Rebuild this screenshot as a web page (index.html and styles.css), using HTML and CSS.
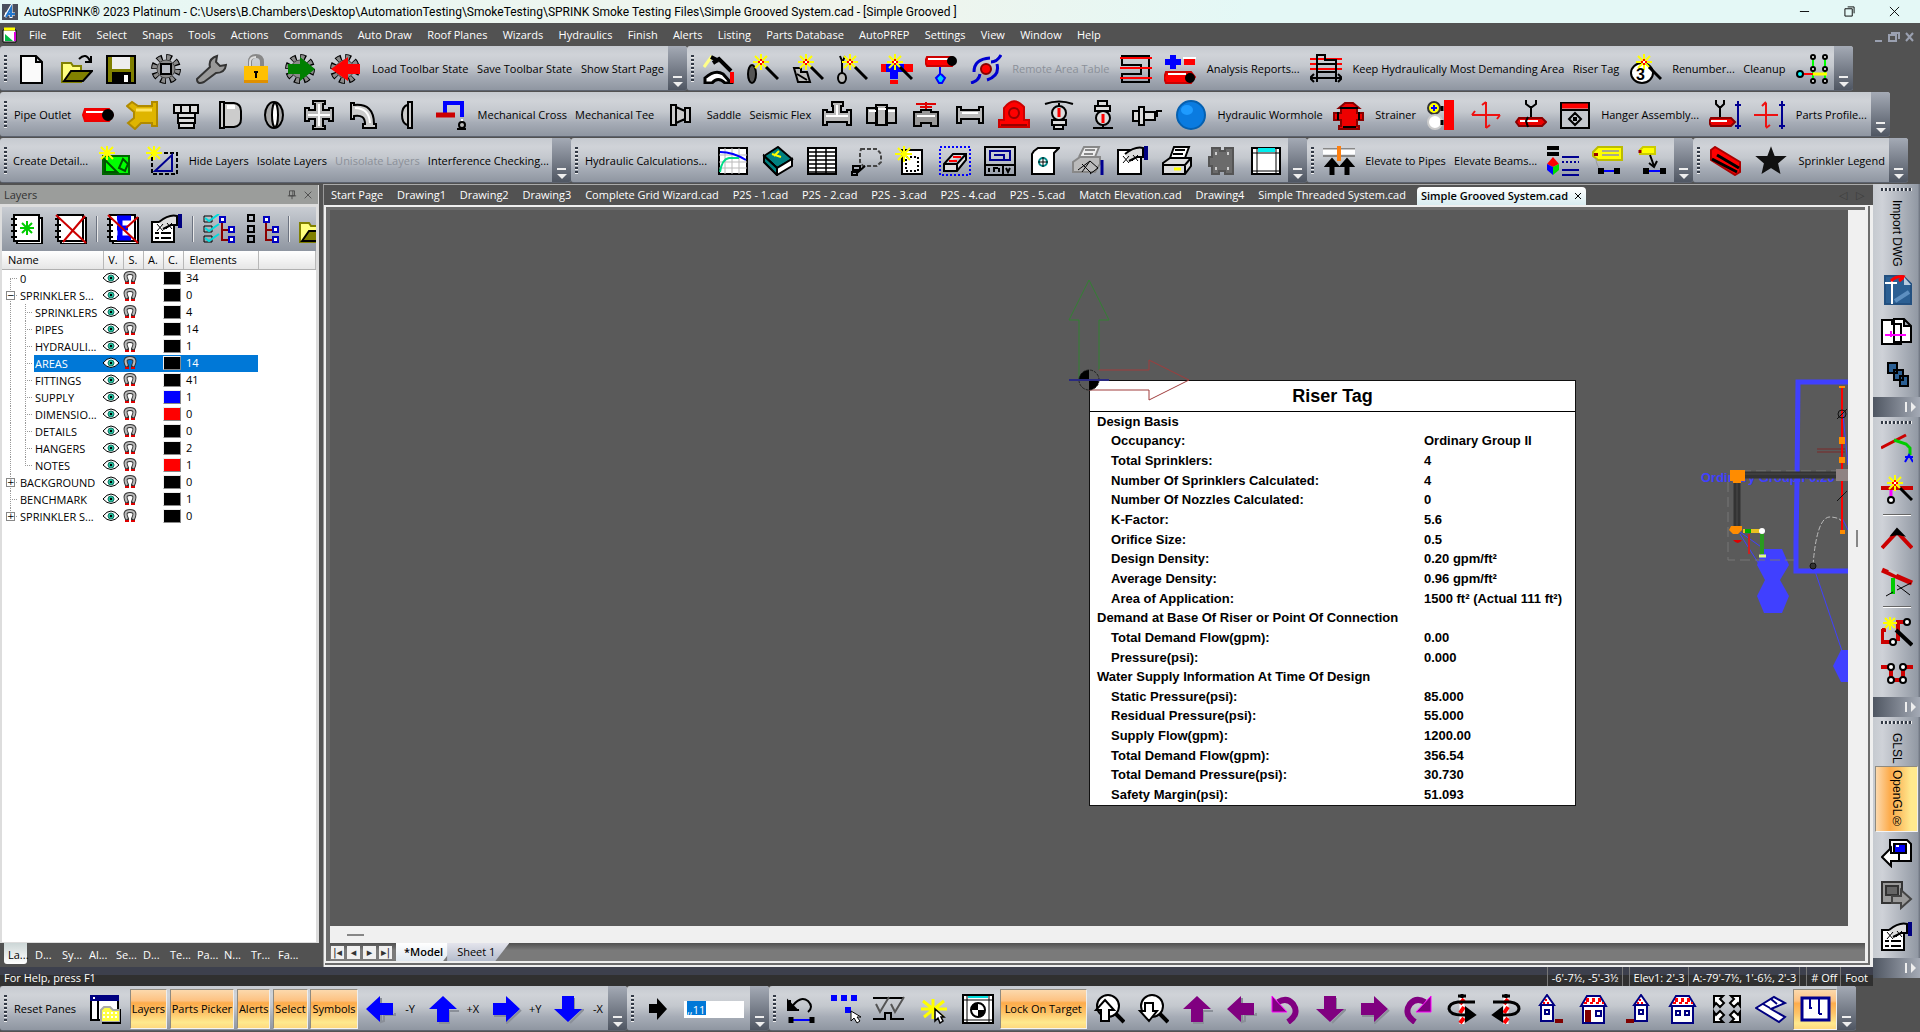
FILE: index.html
```html
<!DOCTYPE html>
<html lang="en">
<head>
<meta charset="utf-8">
<title>AutoSPRINK 2023 Platinum</title>
<link rel="stylesheet" href="styles.css">
</head>
<body>
<svg class="sprite" aria-hidden="true">
<defs>
<g id="wand"><path d="M14 0v16M6 8h16M8 2l12 12M20 2L8 14" stroke="#ff0"/><path d="M14 5v6M11 8h6" stroke="#f00"/><path d="M13 8h2" stroke="#fff"/><path d="M19 13l12 12" stroke-width="3"/></g>
<g id="gearbase"><circle cx="16" cy="15" r="12" stroke="#000" stroke-width="6" stroke-dasharray="5.6 3.8"/><circle cx="16" cy="15" r="11" stroke="#8a8a8a" stroke-width="6" stroke-dasharray="3.2 5.4" stroke-dashoffset="-.8"/><circle cx="16" cy="15" r="9" fill="#8a8a8a" stroke="#444" stroke-width="1"/></g>
<g id="housebody"><path d="M5 12h21v17h-21z" fill="#fff" stroke="#000080"/><path d="M3 12l6-10h13l6 10z" fill="#fff" stroke="#000080"/><path d="M8 5h16M6 9h20M8 7h16" stroke="#f00" stroke-dasharray="3 3"/></g>
<g id="hand"><path d="M8 8q10-8 18-6v9h-6l-8 4" fill="#ddd"/><path d="M6 10l6 7m0-7l-6 7m10-8l5 6m0-6l-6 6" stroke-width="1"/><path d="M29 0v14" stroke="#000080" stroke-width="4"/></g>
<g id="tree"><path d="M19 6v20h8M19 16h8" stroke="#8b0000"/><path d="M17 3h5v5h-5zM26 13h5v5h-5zM26 23h5v5h-5z" fill="#fff" stroke="#0000c0"/></g>
<g id="notebook"><path d="M6 4h25v26h-25z" fill="#fff"/><path d="M3 1h25v26h-25z" fill="#fff"/><path d="M0 5h6M0 11h6M0 17h6M0 23h6"/></g>
</defs>
<symbol id="new" viewBox="0 0 32 30"><path d="M5 2h15l6 6v21h-21zM20 2v6h6" fill="#fafafa"/></symbol>
<symbol id="open" viewBox="0 0 32 30"><path d="M1 9h9l2 3h8v16h-19z" fill="#ffff80" stroke="#808000"/><path d="M3 27l7-10h21l-9 10z" fill="#808000"/><path d="M18 5q7-7 11 2M30 2v6h-6"/></symbol>
<symbol id="save" viewBox="0 0 32 30"><path d="M2 2h28v27h-28z" fill="#808000"/><path d="M7 3h18v12h-18z" fill="#eee" stroke="none"/><path d="M8 19h17v10h-17z" fill="#000"/><path d="M21 21v7" stroke="#fff" stroke-width="4"/></symbol>
<symbol id="gear" viewBox="0 0 32 30"><use href="#gearbase"/><path d="M11 10h10v10h-10z" fill="#b8bcc4"/></symbol>
<symbol id="wrench" viewBox="0 0 32 30"><path d="M2 25l13-12q-2-8 7-11l-1 6 4 4 6-1q-1 8-10 8l-12 9q-7 3-7-3z" fill="#999" stroke="#333"/></symbol>
<symbol id="lock" viewBox="0 0 32 30"><path d="M10 13v-5q0-6 6-6t6 6v5" stroke="#888" stroke-width="4"/><path d="M10 12v-4q0-5 6-5" stroke="#ddd"/><path d="M4 12h24v17h-24z" fill="#ffc000" stroke="none"/><path d="M4 26h24v3h-24z" fill="#e09000" stroke="none"/><path d="M16 17v7M14 18h4" stroke="#000"/></symbol>
<symbol id="gright" viewBox="0 0 32 30"><use href="#gearbase"/><path d="M4 10h12v-7l15 12-15 12v-7h-12z" fill="#008000" stroke="none"/></symbol>
<symbol id="gleft" viewBox="0 0 32 30"><use href="#gearbase"/><path d="M31 10h-12v-7l-17 12 17 12v-7h12z" fill="#f00" stroke="none"/></symbol>
<symbol id="bend" viewBox="0 0 32 30"><path d="M1 13l8-11" stroke="#ff8" stroke-width="3"/><path d="M8 3l8 4M10 9l6-4 12 12" stroke-width="4"/><path d="M2 29v-5q10-9 18-4l8 9h-6q-7-7-13 0z" fill="#fff" stroke-width="3"/><path d="M29 18v11" stroke="#f00" stroke-width="4"/></symbol>
<symbol id="w1" viewBox="0 0 32 30"><ellipse cx="5" cy="20" rx="4" ry="9" fill="#555"/><use href="#wand"/></symbol>
<symbol id="w2" viewBox="0 0 32 30"><path d="M2 14h7v4h6l3 10h-12l-2-7z" fill="#bbb"/><path d="M5 20l10 6"/><use href="#wand"/></symbol>
<symbol id="w3" viewBox="0 0 32 30"><path d="M4 2l2 5v13M9 2l-2 5"/><ellipse cx="6" cy="24" rx="4" ry="5" fill="#bbb"/><use href="#wand"/></symbol>
<symbol id="w4" viewBox="0 0 32 30"><path d="M0 14h32" stroke="#f00" stroke-width="8"/><path d="M5 14h18M13 14v11" stroke="#00f" stroke-width="8"/><path d="M9 28h8" stroke="#f00" stroke-width="4"/><use href="#wand"/></symbol>
<symbol id="drop" viewBox="0 0 32 30"><path d="M2 3h25l3 4-3 5h-25l-2-4z" fill="#f00" stroke="#c00"/><path d="M3 5h20" stroke="#fff"/><circle cx="27" cy="7" r="4" fill="#000"/><path d="M15 13v7l-4 4 3 5h3l3-5-4-4" fill="#0cf" stroke="#00f"/></symbol>
<symbol id="orbit" viewBox="0 0 32 30"><path d="M1 29q8-2 9-9M31 1q-4 7-10 7M4 18q0-13 16-14M27 10q3 12-10 16" stroke="#0000d0" stroke-width="3"/><circle cx="16" cy="15" r="5" fill="#f00" stroke="#800"/></symbol>
<symbol id="ladder" viewBox="0 0 32 30"><path d="M2 2h27v26h-27v-8h19v-9h-19z"/><path d="M0 4h32M0 14h32M0 24h32" stroke="#f00"/></symbol>
<symbol id="pm" viewBox="0 0 32 30"><path d="M1 8h16M9 1v14" stroke="#00f" stroke-width="6"/><path d="M19 4h13" stroke="#fff"/><path d="M20 8h11" stroke="#f00" stroke-width="6"/><path d="M2 18h25l4 5-4 6h-25l-2-5z" fill="#f00" stroke="#c00"/><path d="M4 20h18" stroke="#fff"/><circle cx="26" cy="24" r="4" fill="#000"/></symbol>
<symbol id="tank" viewBox="0 0 32 30"><path d="M0 5h32M0 10h32M0 15h32" stroke="#f00"/><path d="M7 28v-27h8v5h11v22M7 10h19M7 18h19M0 24h32M4 20l-4 4 4 4M28 20l4 4-4 4"/></symbol>
<symbol id="ren" viewBox="0 0 32 30"><ellipse cx="12" cy="19" rx="11" ry="10" fill="#fff"/><use href="#wand"/><text x="6" y="26" class="tx">3</text></symbol>
<symbol id="nodes" viewBox="0 0 32 30"><path d="M17 4v24M29 4v24" stroke="#0f0" stroke-width="2"/><path d="M4 20h14" stroke="#f00"/><path d="M17 20h14" stroke="#ff0" stroke-width="3"/><circle cx="4" cy="20" r="3" fill="#0ff"/><g fill="#fff"><circle cx="17" cy="3" r="2"/><circle cx="29" cy="3" r="2"/><circle cx="17" cy="15" r="2"/><circle cx="29" cy="15" r="2"/><circle cx="17" cy="27" r="2"/><circle cx="29" cy="27" r="2"/></g></symbol>
<symbol id="pipe" viewBox="0 0 32 30"><path d="M3 9h24l4 6-4 6h-24l-2-6z" fill="#f00" stroke="#e00"/><path d="M4 12h18" stroke="#fff"/><circle cx="26" cy="15" r="5" fill="#000"/></symbol>
<symbol id="wye" viewBox="0 0 32 30"><path d="M1 6l5-4 6 4h14v-4h5v24h-5v-3h-11l-6 6-7-6 6-5v-6z" fill="#dfb500" stroke="#b08a00"/><path d="M10 10h16" stroke="#ffe460" stroke-width="3"/></symbol>
<symbol id="plug" viewBox="0 0 32 30"><path d="M4 5h24v8h-24zM8 13h17v5h-17zM8 18h17v5h-17zM9 23h15v5h-15z" fill="#ddd"/><path d="M11 5v8M20 5v8"/></symbol>
<symbol id="cap" viewBox="0 0 32 30"><path d="M6 2h4v26h-4zM10 3h10q7 1 7 8v8q0 7-7 8h-10" fill="#ccc"/><path d="M13 7h8" stroke="#fff" stroke-width="4"/></symbol>
<symbol id="ring" viewBox="0 0 32 30"><ellipse cx="16" cy="15" rx="9" ry="13" fill="#aaa"/><ellipse cx="17" cy="15" rx="3" ry="12" fill="#fff"/></symbol>
<symbol id="cross" viewBox="0 0 32 30"><path d="M10 1h12v3h-2v6h6v-2h4v13h-4v-2h-6v7h2v3h-12v-3h2v-7h-6v2h-4v-13h4v2h6v-6h-2z" fill="#bbb"/><path d="M16 4v22M5 15h22" stroke="#fff"/></symbol>
<symbol id="elbow" viewBox="0 0 32 30"><path d="M4 3h3v2q20-2 20 19h2v4h-13v-4h2q0-10-11-8v3h-3z" fill="#ccc"/><path d="M8 8q14 0 15 15" stroke="#fff"/></symbol>
<symbol id="disc" viewBox="0 0 32 30"><path d="M17 2h4v26h-4zM16 5q-5 2-5 10t5 10" fill="#ccc"/></symbol>
<symbol id="arm" viewBox="0 0 32 30"><path d="M10 13v-10h17v14" stroke="#00f" stroke-width="4"/><path d="M1 15h19" stroke="#c00" stroke-width="5"/><path d="M27 19v4" stroke="#fff"/><circle cx="27" cy="25" r="3" fill="#bbb"/><path d="M22 29h9"/></symbol>
<symbol id="reducer" viewBox="0 0 32 30"><path d="M6 5h5v20h-5zM11 7l9 4v8l-9 4M20 8h5v14h-5z" fill="#ccc"/></symbol>
<symbol id="tee" viewBox="0 0 32 30"><path d="M11 2h11v4h-2v6h6v-2h4v15h-4v-3h-20v3h-4v-15h4v2h6v-6h-1z" fill="#bbb"/><path d="M5 16h22M16 5v10" stroke="#fff"/></symbol>
<symbol id="coup" viewBox="0 0 32 30"><path d="M1 8h10v15h-10zM20 8h10v15h-10zM10 5h11v20h-11z" fill="#bbb"/><path d="M3 11h7M12 9h8M22 11h7" stroke="#fff"/></symbol>
<symbol id="valve" viewBox="0 0 32 30"><path d="M6 4h20M10 7h12M16 2v8" stroke="#d00"/><path d="M4 12h7v-2h10v2h7v14h-7v-3h-10v3h-7z" fill="#999"/><path d="M7 16h18" stroke="#fff"/></symbol>
<symbol id="nip" viewBox="0 0 32 30"><path d="M3 7h4v3h18v-3h4v16h-4v-4h-18v4h-4z" fill="#bbb"/><path d="M8 13h16" stroke="#fff"/></symbol>
<symbol id="pump" viewBox="0 0 32 30"><path d="M1 27v-7h5v-12q10-13 20-1v13h5v7z" fill="#f00" stroke="#c00"/><circle cx="16" cy="13" r="5"  stroke="#900"/><path d="M3 25h26" stroke="#900"/></symbol>
<symbol id="spu" viewBox="0 0 32 30"><path d="M2 4q14-5 28 0M16 3v4"/><circle cx="16" cy="13" r="7" fill="#ddd"/><path d="M16 8v9" stroke="#f00" stroke-width="3"/><path d="M9 20h14v5h-14zM11 25h9v4h-9z" fill="#ddd"/></symbol>
<symbol id="spd" viewBox="0 0 32 30"><path d="M11 1h9v5h-9zM8 6h15v5h-15z" fill="#ddd"/><circle cx="16" cy="18" r="7" fill="#ddd"/><path d="M16 14v9" stroke="#f00" stroke-width="3"/><path d="M16 25v3M6 28h20"/></symbol>
<symbol id="sps" viewBox="0 0 32 30"><path d="M2 11h6v10h-6zM8 7h5v18h-5zM13 12h11v8h-11zM24 16h2v-5h5" fill="#ddd"/></symbol>
<symbol id="ball" viewBox="0 0 32 30"><ellipse cx="16" cy="15" rx="14" ry="14" fill="#0a7be0" stroke="#0560b0"/><ellipse cx="12" cy="10" rx="6" ry="5" fill="#1e9bff" stroke="none"/></symbol>
<symbol id="hydrant" viewBox="0 0 32 30"><path d="M6 8l6-5h8l6 5h-2v5h6v7h-6v6h2v3h-20v-3h2v-6h-7v-7h7v-5z" fill="#e00" stroke="#800"/><path d="M5 12v8M26 12v8M10 27h13M7 8h18"/></symbol>
<symbol id="alarm" viewBox="0 0 32 30"><path d="M23 0v30" stroke="#f00" stroke-width="10"/><circle cx="8" cy="8" r="6" fill="#ff0" stroke="#333"/><path d="M5 8h6M8 5v6" stroke="#00f"/><circle cx="9" cy="22" r="7" fill="#fff" stroke="#ccc"/><path d="M16 6v5M16 20v5" stroke-width="3"/></symbol>
<symbol id="axis" viewBox="0 0 32 30"><path d="M2 15h28M16 2v26M5 11l-3 4M27 19l3-4M12 5l4-3M20 25l-4 3" stroke="#e11"/></symbol>
<symbol id="hanger" viewBox="0 0 32 30"><path d="M11 0v4l4 3h2l4-3v-4M16 7v10"/><path d="M4 18h23l4 4-4 4h-23l-3-4z" fill="#e00" stroke="#800"/><path d="M5 21h18" stroke="#fff"/><path d="M13 17l-2 4 2 6"/></symbol>
<symbol id="hbox" viewBox="0 0 32 30"><path d="M2 3h28v25h-28z" fill="#c4c8ce"/><path d="M3 6h26" stroke="#f00" stroke-width="5"/><path d="M2 10h28"/><path d="M16 13l6 6-6 6-6-6zM15 18h2v2h-2z"/></symbol>
<symbol id="hdim" viewBox="0 0 32 30"><path d="M7 0v4l3 3h2l3-3v-4M11 7v10"/><path d="M2 18h20l4 4-4 4h-20l-2-4z" fill="#e00" stroke="#800"/><path d="M2 21h16" stroke="#fff"/><path d="M29 1v28M26 5h6M26 26h6" stroke="#000090"/></symbol>
<symbol id="adim" viewBox="0 0 32 30"><path d="M0 15h24M12 3v24M8 6l4-4M16 25l-4 3" stroke="#e11"/><path d="M28 1v28M25 5h6M25 26h6" stroke="#000090"/></symbol>
<symbol id="dnew" viewBox="0 0 32 30"><path d="M4 10h26v18h-26z" fill="#0f0" stroke="#060"/><path d="M6 14l12 12h-12zM24 13l5 5-3 7-6-3z"  stroke="#050"/><path d="M8 0v14M0 7h16M2 1l12 12M14 1L2 13" stroke="#ff0"/></symbol>
<symbol id="dsel" viewBox="0 0 32 30"><path d="M6 7h25v21h-25z" stroke-dasharray="4 2"/><path d="M9 25h17v-16z" stroke="#000090"/><path d="M8 0v14M0 7h16M2 1l12 12M14 1L2 13" stroke="#ff0"/></symbol>
<symbol id="graph" viewBox="0 0 32 30"><path d="M2 2h28v26h-28z" fill="#fff"/><path d="M8 2v26M15 2v26M22 2v26M2 9h28M2 16h28M2 22h28" stroke="#bbb" stroke-width="1"/><path d="M3 6q13 0 26 8" stroke="#00f"/><path d="M3 26q2-13 9-14h10" stroke="#0d8"/></symbol>
<symbol id="book" viewBox="0 0 32 30"><path d="M2 10l14-9 14 12-15 9z" fill="#008080"/><path d="M2 10v6l13 13 15-9v-7l-15 9z" fill="#fff"/><path d="M2 10l13 12v7l-13-13z" fill="#008080"/><path d="M10 8l9 3M17 5l-5 5" stroke="#ff0"/></symbol>
<symbol id="table" viewBox="0 0 32 30"><path d="M2 2h28v26h-28z" fill="#fff"/><path d="M10 2v26M20 2v26M2 6h28M2 10h28M2 14h28M2 18h28M2 22h28M2 26h28" stroke-width="1.5"/></symbol>
<symbol id="lasso" viewBox="0 0 32 30"><path d="M10 3h16l4 5v8l-4 4h-14l-3-4v-9z" stroke-dasharray="4 2" stroke="#444"/><path d="M14 20l-8 7M2 20h7v4h-7zM1 26h5v3h-5z"/></symbol>
<symbol id="tnew" viewBox="0 0 32 30"><path d="M7 4h20v24h-20z" fill="#fff"/><path d="M11 11h12v14h-12z" stroke-dasharray="2 2"/><path d="M9 0v16M0 8h17M3 2l12 12M15 2L3 14" stroke="#ff0"/></symbol>
<symbol id="eraser" viewBox="0 0 32 30"><path d="M1 1h30v28h-30z" stroke="#00f" stroke-dasharray="2 2"/><path d="M5 18l9-10h13v6l-9 11h-13zM5 18h13l9-10M18 18v7" fill="#ddd"/><path d="M14 11h8M10 15h8" stroke="#f00"/></symbol>
<symbol id="tblock" viewBox="0 0 32 30"><path d="M1 1h30v28h-30zM1 19h30M19 19v10"/><path d="M6 5h20v9h-20zM10 9h10v4" stroke="#000090"/><path d="M5 22v4M9 22h5M10 22v4M15 22v4M22 22l2 4 2-4"/></symbol>
<symbol id="pgear" viewBox="0 0 32 30"><path d="M6 5l4-3h21l-5 5v21h-22v-20z" fill="#fff"/><circle cx="15" cy="16" r="4" stroke="#088"/><path d="M10 16h10M15 11v10" stroke-width="1"/></symbol>
<symbol id="printer" viewBox="0 0 32 30"><path d="M9 12l4-11h15l-4 11" fill="#fff"/><path d="M2 17l7-5h21v8l-6 8h-22z" fill="#ddd"/><path d="M2 19h22l6-7M24 20v8M14 4h10M12 8h10"/><path d="M13 23h7" stroke="#ff0" stroke-width="3"/></symbol>
<symbol id="printhand" viewBox="0 0 32 30"><path d="M7 11l5-10h15l-4 10" fill="#eee" stroke="#888"/><path d="M1 16l7-5h20v7l-5 8h-22z" fill="#bbb" stroke="#888"/><path d="M13 4h10M12 8h9" stroke="#888"/><path d="M6 24l12-9 8 7-8 6M10 18l9 9M18 15l-8 11" stroke-width="1"/><path d="M30 14v15" stroke="#000090" stroke-width="3"/></symbol>
<symbol id="sheethand" viewBox="0 0 32 30"><path d="M1 4h23v24h-23z" fill="#fff"/><use href="#hand"/></symbol>
<symbol id="device" viewBox="0 0 32 30"><path d="M6 2h8v3h5v-3h8v26h-8v-3h-6v3h-7v-8h-3v-9h3z" fill="#6b6b6b" stroke="#555"/><path d="M22 6v3M22 21v3M10 6v3M10 21v3" stroke="#ccc"/></symbol>
<symbol id="window" viewBox="0 0 32 30"><path d="M2 2h28v26h-28z" fill="#fff"/><path d="M7 2v26M26 2v26M2 7h28M2 25h28" stroke-width="1"/><path d="M8 4h17" stroke="#0ee" stroke-width="4"/></symbol>
<symbol id="elev" viewBox="0 0 32 30"><path d="M0 3h32M0 10h32" stroke="#888"/><path d="M0 6h32" stroke="#fff" stroke-width="5"/><path d="M16 0v15" stroke="#ff8010" stroke-width="4"/><path d="M9 15v14M24 15v14" stroke-width="5"/><path d="M3 20l6-7 6 7zM18 20l6-7 6 7z" fill="#000"/></symbol>
<symbol id="legend" viewBox="0 0 32 30"><path d="M0 2h12M0 8h12" stroke-width="4"/><path d="M15 11h17M15 24h17M15 29h17" stroke="#000090"/><path d="M15 16h17" stroke="#000090" stroke-dasharray="2 2"/><path d="M6 11l6 7-6 3-6-3z" fill="#f00" stroke="none"/><path d="M0 18l6 3v8l-6-5z" fill="#00f" stroke="none"/><path d="M12 18l-6 3v8l6-5z" fill="#0d0" stroke="none"/></symbol>
<symbol id="tag" viewBox="0 0 32 30"><path d="M1 6l5-5h24v13h-24l-5-4z" fill="#ff0" stroke="#bb0"/><path d="M10 5h17M10 9h17" stroke="#aa8"/><path d="M4 7v3" stroke="#900" stroke-width="4"/><path d="M4 12q0 8 6 13" stroke="#999" stroke-width="1"/><path d="M9 25h18" stroke="#00f"/><path d="M9 22v6M25 22v6" stroke-width="6"/></symbol>
<symbol id="tagdrop" viewBox="0 0 32 30"><path d="M4 4l3-3h12v7h-15z" fill="#ff0" stroke="#cc0"/><path d="M4 4v3" stroke="#900" stroke-width="3"/><path d="M14 9l4 11M13 17l5 4 3-6"/><path d="M10 25h18" stroke="#00f"/><path d="M10 22v6M27 22v6" stroke-width="6"/></symbol>
<symbol id="beam" viewBox="0 0 32 30"><path d="M2 4l4-3 25 15v10l-5 3-24-15z" fill="#f00" stroke="#a00"/><path d="M3 13l25 13M8 9l22 13" stroke-width="3"/></symbol>
<symbol id="star" viewBox="0 0 32 30"><path d="M16 3l3 8h10l-7 6 2 9-8-5-8 5 2-9-7-6h10z" fill="#111" stroke="#111"/></symbol>
<symbol id="panes" viewBox="0 0 32 30"><path d="M2 2h27v24h-27z" fill="#fff"/><path d="M9 7v19"/><path d="M1 4h29" stroke="#000080" stroke-width="6"/><path d="M4 4h2" stroke="#fff"/><path d="M12 28v-12l3-3h6l3 3h7v12z" fill="#ff4" stroke="#aaa"/><path d="M14 19h16M14 23h16" stroke="#fff" stroke-dasharray="2 2"/><path d="M13 29h19v-14"/></symbol>
<symbol id="al" viewBox="0 0 32 30"><path d="M17 4v24l3-1v-6h11v-2" stroke="#8a8f98"/><path d="M2 15L16 2v7h13v12h-13v7z" fill="currentColor" stroke="none"/></symbol>
<symbol id="ar" viewBox="0 0 32 30"><path d="M4 22h13v7l14-13" stroke="#8a8f98"/><path d="M30 15L16 2v7h-13v12h13v7z" fill="currentColor" stroke="none"/></symbol>
<symbol id="au" viewBox="0 0 32 30"><path d="M22 17v12h-10M22 17h10" stroke="#8a8f98"/><path d="M16 2L30 15h-8v13h-12v-13h-8z" fill="currentColor" stroke="none"/></symbol>
<symbol id="ad" viewBox="0 0 32 30"><path d="M22 4v12h9l-13 13" stroke="#8a8f98"/><path d="M16 28L30 15h-8v-13h-12v13h-8z" fill="currentColor" stroke="none"/></symbol>
<symbol id="go" viewBox="0 0 32 30"><path d="M6 10h8v-6l10 11-10 11v-7h-8z" fill="#000" stroke="none"/></symbol>
<symbol id="ccw" viewBox="0 0 32 30"><path d="M9 8q9-5 15 2 7 10-5 18" stroke="currentColor" stroke-width="6"/><path d="M3 2v16h15z" fill="currentColor" stroke="#f0f" stroke-width="1"/></symbol>
<symbol id="cw" viewBox="0 0 32 30"><path d="M23 8q-9-5-15 2-7 10 5 18" stroke="currentColor" stroke-width="6"/><path d="M29 2v16h-15z" fill="currentColor" stroke="#f0f" stroke-width="1"/></symbol>
<symbol id="undodim" viewBox="0 0 32 30"><path d="M6 14q9-13 17-7 6 6 0 11M5 6v10h9"/><path d="M3 16v-9l9 9z" fill="#000"/><path d="M7 26h19" stroke="#00f" stroke-width="2"/><path d="M6 23v6M27 23v6" stroke-width="5"/></symbol>
<symbol id="dots" viewBox="0 0 32 30"><path d="M2 4h6M12 4h6M22 4h6M16 16h6" stroke="#00f" stroke-width="6"/><path d="M22 17v10l3-3 3 5 3-2-3-4h4z" fill="#fff" stroke-width="1"/></symbol>
<symbol id="checks" viewBox="0 0 32 30"><path d="M0 4h31M0 25h12v-6h6v6h13"/><path d="M3 10l4 8 9-15M18 10l4 8 9-15" stroke="#555"/></symbol>
<symbol id="spark" viewBox="0 0 32 30"><path d="M4 15h26M16 5v20M6 7l20 16M27 7L7 23" stroke="#ff0" stroke-width="3"/><path d="M18 15v12l3-3 2 5 3-2-2-4h3z" fill="#fff" stroke-width="1.5"/></symbol>
<symbol id="target" viewBox="0 0 32 30"><path d="M1 1h30v28h-30z" fill="#fff"/><path d="M5 1v28M27 1v28M1 6h30M1 26h30" stroke-width="1"/><path d="M6 3h20" stroke="#0dd"/><circle cx="16" cy="16" r="7" fill="#fff"/><path d="M16 16v-7a7 7 0 0 0-7 7zM16 16v7a7 7 0 0 0 7-7z" fill="#000" stroke="none"/></symbol>
<symbol id="zin" viewBox="0 0 32 30"><circle cx="15" cy="12" r="11" fill="#fff"/><path d="M23 20l8 8" stroke-width="4"/><path d="M12 6l9 10h-5v11h-8v-11h-5z" fill="#fff"/></symbol>
<symbol id="zout" viewBox="0 0 32 30"><circle cx="15" cy="12" r="11" fill="#fff"/><path d="M23 20l8 8" stroke-width="4"/><path d="M12 27l8-10h-4v-8h-8v8h-5z" fill="#fff"/></symbol>
<symbol id="rotl" viewBox="0 0 32 30"><path d="M16 4v26" stroke="#fff" stroke-width="5"/><path d="M18 5l-4 5M18 13l-4 6M18 24l-4 5" stroke="#f00" stroke-width="4"/><path d="M12 2h8M16 0v4M29 8h-17q-9 1-9 7 1 6 13 6h8" stroke-width="3"/><path d="M20 14l9 7-9 6z" fill="#000"/></symbol>
<symbol id="rotr" viewBox="0 0 32 30"><path d="M16 4v26" stroke="#fff" stroke-width="5"/><path d="M18 5l-4 5M18 13l-4 6M18 24l-4 5" stroke="#f00" stroke-width="4"/><path d="M12 2h8M16 0v4M3 8h17q9 1 9 7-1 6-13 6h-8" stroke-width="3"/><path d="M12 14l-9 7 9 6z" fill="#000"/></symbol>
<symbol id="h1" viewBox="0 0 32 30"><path d="M7 11h12v16h-12z" fill="#fff" stroke="#000080"/><path d="M6 11l7-10 7 10z" fill="#fff" stroke="#000080"/><path d="M9 9h8M11 6h4" stroke="#f00" stroke-dasharray="2 2"/><path d="M11 16h4v4h-4z" stroke="#000080"/><path d="M21 27h8" stroke="#800000" stroke-width="4"/></symbol>
<symbol id="h2" viewBox="0 0 32 30"><use href="#housebody"/><path d="M10 16v12" stroke="#800000" stroke-width="6"/><path d="M18 17h5v5h-5z" stroke="#000080"/></symbol>
<symbol id="h3" viewBox="0 0 32 30"><path d="M13 11h12v16h-12z" fill="#fff" stroke="#000080"/><path d="M12 11l7-10 7 10z" fill="#fff" stroke="#000080"/><path d="M15 9h8M17 6h4" stroke="#f00" stroke-dasharray="2 2"/><path d="M17 16h4v4h-4z" stroke="#000080"/><path d="M4 27h8" stroke="#800000" stroke-width="4"/></symbol>
<symbol id="h4" viewBox="0 0 32 30"><use href="#housebody"/><path d="M9 17h4v4h-4zM18 17h4v4h-4z" stroke="#000080"/></symbol>
<symbol id="fit" viewBox="0 0 32 30"><path d="M3 2h9l-3 3 4 4-4 4-4-4-2 3zM29 2h-9l3 3-4 4 4 4 4-4 2 3zM3 28h9l-3-3 4-4-4-4-4 4-2-3zM29 28h-9l3-3-4-4 4-4 4 4 2-3z" fill="#fff"/></symbol>
<symbol id="iso" viewBox="0 0 32 30"><path d="M1 14l18-11 11 6-14 6 14 8-6 5z" fill="#fff" stroke="#000080"/><path d="M8 10l7 4M16 5l6 5" stroke="#000080"/></symbol>
<symbol id="plan" viewBox="0 0 32 30"><path d="M3 4h27v22h-27z" fill="#fff" stroke="#000090" stroke-width="3"/><path d="M11 4v9M20 4v16M10 14h3M20 20h3" stroke="#000090"/></symbol>
<symbol id="dwg" viewBox="0 0 32 30"><path d="M4 1h18l8 8v20h-26z" fill="#2b5f93" stroke="#235080"/><path d="M14 26l14-9" stroke="#5d8fc0" stroke-width="4"/><path d="M4 8h12M11 5v24" stroke="#fff"/><path d="M10 6q6-6 14-4M18 6l5-4" stroke="#f00" stroke-width="3"/><path d="M23 2l7 8h-7z" fill="#b8cce0" stroke="none"/></symbol>
<symbol id="pages" viewBox="0 0 32 30"><path d="M1 3h10v4h9v20h-19zM13 2h10l7 7v16h-17zM23 2v7h7" fill="#fff"/><path d="M4 18h21M10 14v6" stroke="#f0f"/></symbol>
<symbol id="chain" viewBox="0 0 32 30"><path d="M7 4h9v10h-9zM13 11h9v10h-9zM19 17h8v10h-8z" fill="#2b5f93"/></symbol>
<symbol id="branch" viewBox="0 0 32 30"><path d="M0 15L25 2" stroke="#c00" stroke-width="3"/><path d="M13 7l12 4 4 4v7" stroke="#0c0" stroke-width="3"/><path d="M24 29l4-7 4 7M24 24h8" stroke="#00f"/></symbol>
<symbol id="wpipe" viewBox="0 0 32 30"><path d="M0 13h32" stroke="#c00" stroke-width="4"/><path d="M10 15v8" stroke="#f0f" stroke-width="3"/><circle cx="10" cy="25" r="3" fill="#fff"/><use href="#wand"/></symbol>
<symbol id="chev" viewBox="0 0 32 30"><path d="M1 23L16 7l15 16" stroke="#c00" stroke-width="4"/><path d="M11 10l5-6 6 6-5-1z" fill="#000"/></symbol>
<symbol id="beam2" viewBox="0 0 32 30"><path d="M1 3l30 13" stroke="#c00" stroke-width="5"/><path d="M8 3l8 4" stroke="#ccc" stroke-width="3"/><path d="M12 11v16" stroke="#0c0" stroke-width="4"/><path d="M5 29l7-4M16 18l13 10M16 23l14-7" stroke-width="1"/></symbol>
<symbol id="wpath" viewBox="0 0 32 30"><path d="M1 12v13h10M17 24v-19h8M1 13h4" stroke="#c00" stroke-width="4"/><path d="M9 0v13M2 6h14M4 1l10 10M14 1L4 11" stroke="#ff0"/><path d="M15 13l16 15" stroke-width="4"/><circle cx="26" cy="5" r="3" fill="#fff"/><circle cx="12" cy="25" r="3" fill="#fff"/></symbol>
<symbol id="npath" viewBox="0 0 32 30"><path d="M0 8h10v13h12v-13h10" stroke="#c00" stroke-width="4"/><g fill="#fff"><circle cx="10" cy="8" r="3"/><circle cx="22" cy="8" r="3"/><circle cx="10" cy="21" r="3"/><circle cx="22" cy="21" r="3"/></g></symbol>
<symbol id="mleft" viewBox="0 0 32 30"><path d="M9 2h17l4 4v17h-21z" fill="#fff"/><path d="M13 6h12v9h-12z" fill="#00f"/><path d="M15 8h3" stroke="#fff"/><path d="M1 19l9-9v5h8v8h-8v5z" fill="#fff"/></symbol>
<symbol id="mright" viewBox="0 0 32 30"><path d="M1 2h20v21h-20z" fill="#999" stroke="#333"/><path d="M5 6h12v9h-12z" fill="#666" stroke="#333"/><path d="M30 19l-10-9v6h-9v7h9v5z" fill="#999" stroke="#444"/></symbol>
<symbol id="prop" viewBox="0 0 32 30"><path d="M1 8h22v20h-22z" fill="#fff"/><path d="M4 19h16M4 24h16" stroke-dasharray="4 2 12"/><use href="#hand"/></symbol>
<symbol id="nbnew" viewBox="0 0 32 30"><use href="#notebook"/><path d="M16 7v14M9 14h14M11 9l10 10M21 9L11 19" stroke="#0c0"/></symbol>
<symbol id="nbdel" viewBox="0 0 32 30"><use href="#notebook"/><path d="M1 1l30 28M30 2L8 28" stroke="#c00"/></symbol>
<symbol id="nbe" viewBox="0 0 32 30"><use href="#notebook"/><path d="M10 4h14M10 14h11M10 24h14M13 3v22" stroke="#00f" stroke-width="5"/><path d="M1 1l30 28M31 3L19 14" stroke="#c00"/></symbol>
<symbol id="trchk" viewBox="0 0 32 30"><path d="M1 2h8v6h-8zM1 12h8v6h-8zM1 22h8v6h-8z" stroke-width="1"/><path d="M2 4l4 3 10-7M2 14l4 3 10-7M2 24l4 3 10-7" stroke="#0dd"/><use href="#tree"/></symbol>
<symbol id="trbox" viewBox="0 0 32 30"><path d="M1 1h6v6h-6zM1 12h6v6h-6zM1 22h6v6h-6z"/><use href="#tree"/></symbol>
<symbol id="eye" viewBox="0 0 16 12"><path d="M0 6q8-10 16 0-8 9-16 0z" fill="#fff" stroke-width="1"/><circle cx="8" cy="6" r="3" fill="#2b9" stroke="#176" stroke-width="1"/><path d="M7 6h2"/></symbol>
<symbol id="mag" viewBox="0 0 14 14"><path d="M4 13v-3Q0 2 7 2t3 8v3" stroke="#333" stroke-width="4"/><path d="M4 10Q0 2 7 2t3 8" stroke="#bbb"/><path d="M2 12h4M8 12h4" stroke="#d00"/></symbol>
<symbol id="app" viewBox="0 0 16 16"><path d="M0 0h16v16h-16z" fill="#4a4f5c" stroke="none"/><path d="M3 13L9 3v11M3 10h10" stroke="#fff" stroke-width="3"/><path d="M4 13L9 4v9M5 10h8" stroke="#27c"/></symbol>
<symbol id="doc" viewBox="0 0 16 16"><path d="M1 3h13v12h-13z" fill="#fff" stroke-width="1"/><path d="M2 2h11" stroke="#ff0" stroke-width="3"/><path d="M3 7l8 7h-8z" fill="#0b4" stroke="none"/><path d="M13 5v9" stroke="#d0d"/></symbol>
</svg>

<header class="title"><svg class="s16"><use href="#app"/></svg><h1>AutoSPRINK® 2023 Platinum - C:\Users\B.Chambers\Desktop\AutomationTesting\SmokeTesting\SPRINK Smoke Testing Files\Simple Grooved System.cad - [Simple Grooved ]</h1>
<div class="winbtns"><button aria-label="Minimize"><svg viewBox="0 0 12 12"><path d="M1 6h10"/></svg></button><button aria-label="Restore"><svg viewBox="0 0 12 12"><path d="M1 3h8v8h-8zM4 1h7v7"/></svg></button><button aria-label="Close"><svg viewBox="0 0 12 12"><path d="M1 1l10 10M11 1L1 11"/></svg></button></div></header>

<div class="menubar"><svg class="s16"><use href="#doc"/></svg>
<nav><button>File</button><button>Edit</button><button>Select</button><button>Snaps</button><button>Tools</button><button>Actions</button><button>Commands</button><button>Auto Draw</button><button>Roof Planes</button><button>Wizards</button><button>Hydraulics</button><button>Finish</button><button>Alerts</button><button>Listing</button><button>Parts Database</button><button>AutoPREP</button><button>Settings</button><button>View</button><button>Window</button><button>Help</button></nav>
<div class="mdibtns"><button aria-label="Minimize drawing"><svg viewBox="0 0 12 12"><path d="M3 10h7"/></svg></button><button aria-label="Restore drawing"><svg viewBox="0 0 12 12"><path d="M1 4h7v6h-7zM3 2h8v6"/></svg></button><button aria-label="Close drawing"><svg viewBox="0 0 12 12"><path d="M2 2l7 8M9 2L2 10"/></svg></button></div></div>

<div class="bar">
<div class="group g-file"><i class="grip"></i><div class="items">
<button class="ib" aria-label="New"><svg><use href="#new"/></svg></button><button class="ib" aria-label="Open"><svg><use href="#open"/></svg></button><button class="ib" aria-label="Save"><svg><use href="#save"/></svg></button><button class="ib" aria-label="Options"><svg><use href="#gear"/></svg></button><button class="ib" aria-label="Tools"><svg><use href="#wrench"/></svg></button><button class="ib" aria-label="Lock"><svg><use href="#lock"/></svg></button><button class="ib" aria-label="Export settings"><svg><use href="#gright"/></svg></button><button class="ib" aria-label="Import settings"><svg><use href="#gleft"/></svg></button><button class="tb">Load Toolbar State</button><button class="tb">Save Toolbar State</button><button class="tb">Show Start Page</button></div><button class="more" aria-label="More"></button></div>
<div class="group g-hyd"><i class="grip"></i><div class="items">
<button class="ib" aria-label="Bend"><svg><use href="#bend"/></svg></button><button class="ib" aria-label="Auto coupling"><svg><use href="#w1"/></svg></button><button class="ib" aria-label="Auto fitting"><svg><use href="#w2"/></svg></button><button class="ib" aria-label="Auto hanger"><svg><use href="#w3"/></svg></button><button class="ib" aria-label="Auto tee"><svg><use href="#w4"/></svg></button><button class="ib" aria-label="Flow"><svg><use href="#drop"/></svg></button><button class="ib" aria-label="Remote area"><svg><use href="#orbit"/></svg></button><button class="tb" disabled>Remote Area Table</button><button class="ib" aria-label="Grid"><svg><use href="#ladder"/></svg></button><button class="ib" aria-label="Resize pipe"><svg><use href="#pm"/></svg></button><button class="tb">Analysis Reports...</button><button class="ib" aria-label="Peaking"><svg><use href="#tank"/></svg></button><button class="tb">Keep Hydraulically Most Demanding Area</button><button class="tb">Riser Tag</button><button class="ib" aria-label="Number"><svg><use href="#ren"/></svg></button><button class="tb">Renumber...</button><button class="tb">Cleanup</button><button class="ib" aria-label="Nodes"><svg><use href="#nodes"/></svg></button></div><button class="more" aria-label="More"></button></div>
</div>
<div class="bar">
<div class="group g-parts"><i class="grip"></i><div class="items">
<button class="tb">Pipe Outlet</button><button class="ib" aria-label="Pipe"><svg><use href="#pipe"/></svg></button><button class="ib" aria-label="Wye"><svg><use href="#wye"/></svg></button><button class="ib" aria-label="Plug"><svg><use href="#plug"/></svg></button><button class="ib" aria-label="Cap"><svg><use href="#cap"/></svg></button><button class="ib" aria-label="Coupling"><svg><use href="#ring"/></svg></button><button class="ib" aria-label="Cross"><svg><use href="#cross"/></svg></button><button class="ib" aria-label="Elbow"><svg><use href="#elbow"/></svg></button><button class="ib" aria-label="Flange"><svg><use href="#disc"/></svg></button><button class="ib" aria-label="Arm over"><svg><use href="#arm"/></svg></button><button class="tb">Mechanical Cross</button><button class="tb">Mechanical Tee</button><button class="ib" aria-label="Reducer"><svg><use href="#reducer"/></svg></button><button class="tb">Saddle</button><button class="tb">Seismic Flex</button><button class="ib" aria-label="Tee"><svg><use href="#tee"/></svg></button><button class="ib" aria-label="Union"><svg><use href="#coup"/></svg></button><button class="ib" aria-label="Valve"><svg><use href="#valve"/></svg></button><button class="ib" aria-label="Nipple"><svg><use href="#nip"/></svg></button><button class="ib" aria-label="Pump"><svg><use href="#pump"/></svg></button><button class="ib" aria-label="Upright"><svg><use href="#spu"/></svg></button><button class="ib" aria-label="Pendent"><svg><use href="#spd"/></svg></button><button class="ib" aria-label="Sidewall"><svg><use href="#sps"/></svg></button><button class="ib" aria-label="Sphere"><svg><use href="#ball"/></svg></button><button class="tb">Hydraulic Wormhole</button><button class="ib" aria-label="Hydrant"><svg><use href="#hydrant"/></svg></button><button class="tb">Strainer</button><button class="ib" aria-label="Alarm"><svg><use href="#alarm"/></svg></button><button class="ib" aria-label="Brace"><svg><use href="#axis"/></svg></button><button class="ib" aria-label="Hanger"><svg><use href="#hanger"/></svg></button><button class="ib" aria-label="Hanger window"><svg><use href="#hbox"/></svg></button><button class="tb">Hanger Assembly...</button><button class="ib" aria-label="Hanger elevation"><svg><use href="#hdim"/></svg></button><button class="ib" aria-label="Brace elevation"><svg><use href="#adim"/></svg></button><button class="tb">Parts Profile...</button></div><button class="more" aria-label="More"></button></div>
</div>
<div class="bar">
<div class="group g-detail"><i class="grip"></i><div class="items">
<button class="tb">Create Detail...</button><button class="ib" aria-label="New detail"><svg><use href="#dnew"/></svg></button><button class="ib" aria-label="Select detail"><svg><use href="#dsel"/></svg></button><button class="tb">Hide Layers</button><button class="tb">Isolate Layers</button><button class="tb" disabled>Unisolate Layers</button><button class="tb">Interference Checking...</button></div><button class="more" aria-label="More"></button></div>
<div class="group g-calc"><i class="grip"></i><div class="items">
<button class="tb">Hydraulic Calculations...</button><button class="ib" aria-label="Graph"><svg><use href="#graph"/></svg></button><button class="ib" aria-label="Book"><svg><use href="#book"/></svg></button><button class="ib" aria-label="Table"><svg><use href="#table"/></svg></button><button class="ib" aria-label="Lasso"><svg><use href="#lasso"/></svg></button><button class="ib" aria-label="New sheet"><svg><use href="#tnew"/></svg></button><button class="ib" aria-label="Erase"><svg><use href="#eraser"/></svg></button><button class="ib" aria-label="Title block"><svg><use href="#tblock"/></svg></button><button class="ib" aria-label="Preview"><svg><use href="#pgear"/></svg></button><button class="ib" aria-label="Print setup"><svg><use href="#printhand"/></svg></button><button class="ib" aria-label="Page setup"><svg><use href="#sheethand"/></svg></button><button class="ib" aria-label="Print"><svg><use href="#printer"/></svg></button><button class="ib" aria-label="Plug-in"><svg><use href="#device"/></svg></button><button class="ib" aria-label="Viewport"><svg><use href="#window"/></svg></button></div><button class="more" aria-label="More"></button></div>
<div class="group g-elev"><i class="grip"></i><div class="items">
<button class="ib" aria-label="Elevate"><svg><use href="#elev"/></svg></button><button class="tb">Elevate to Pipes</button><button class="tb">Elevate Beams...</button><button class="ib" aria-label="Line styles"><svg><use href="#legend"/></svg></button><button class="ib" aria-label="Tag"><svg><use href="#tag"/></svg></button><button class="ib" aria-label="Drop tag"><svg><use href="#tagdrop"/></svg></button></div><button class="more" aria-label="More"></button></div>
<div class="group g-spr"><i class="grip"></i><div class="items">
<button class="ib" aria-label="Beam"><svg><use href="#beam"/></svg></button><button class="ib" aria-label="Favorite"><svg><use href="#star"/></svg></button><button class="tb">Sprinkler Legend</button></div><button class="more" aria-label="More"></button></div>
</div>

<div class="work">
<aside class="panel">
<div class="phead"><h2>Layers</h2><button aria-label="Pin"><svg viewBox="0 0 12 12"><path d="M3 1h6v6h-6zM1 7h10M6 7v4M7 1v6"/></svg></button><button aria-label="Close panel"><svg viewBox="0 0 12 12"><path d="M2 2l8 8M10 2L2 10"/></svg></button></div>
<div class="pbody">
<div class="ptools"><button class="ib" aria-label="New layer"><svg><use href="#nbnew"/></svg></button><button class="ib" aria-label="Delete layer"><svg><use href="#nbdel"/></svg></button><i class="vsep"></i><button class="ib" aria-label="Delete empty"><svg><use href="#nbe"/></svg></button><button class="ib" aria-label="Properties"><svg><use href="#prop"/></svg></button><i class="vsep"></i><button class="ib" aria-label="Check all"><svg><use href="#trchk"/></svg></button><button class="ib" aria-label="Uncheck all"><svg><use href="#trbox"/></svg></button><i class="vsep"></i><button class="ib" aria-label="Load layers"><svg><use href="#open"/></svg></button></div>
<table class="tree">
<colgroup><col class="c-name"><col class="c-s"><col class="c-s"><col class="c-s"><col class="c-s"><col class="c-el"><col></colgroup>
<thead><tr><th>Name</th><th>V.</th><th>S.</th><th>A.</th><th>C.</th><th>Elements</th><th></th></tr></thead>
<tbody>
<tr><td><div class="nm"><i class="g first"></i><span>0</span></div></td><td><svg class="eye"><use href="#eye"/></svg></td><td><svg class="mag"><use href="#mag"/></svg></td><td></td><td><i class="sw"></i></td><td>34</td></tr>
<tr><td><div class="nm"><i class="g"><b>−</b></i><span>SPRINKLER S...</span></div></td><td><svg class="eye"><use href="#eye"/></svg></td><td><svg class="mag"><use href="#mag"/></svg></td><td></td><td><i class="sw"></i></td><td>0</td></tr>
<tr><td><div class="nm"><i class="g v"></i><i class="g2"></i><span>SPRINKLERS</span></div></td><td><svg class="eye"><use href="#eye"/></svg></td><td><svg class="mag"><use href="#mag"/></svg></td><td></td><td><i class="sw"></i></td><td>4</td></tr>
<tr><td><div class="nm"><i class="g v"></i><i class="g2"></i><span>PIPES</span></div></td><td><svg class="eye"><use href="#eye"/></svg></td><td><svg class="mag"><use href="#mag"/></svg></td><td></td><td><i class="sw"></i></td><td>14</td></tr>
<tr><td><div class="nm"><i class="g v"></i><i class="g2"></i><span>HYDRAULI...</span></div></td><td><svg class="eye"><use href="#eye"/></svg></td><td><svg class="mag"><use href="#mag"/></svg></td><td></td><td><i class="sw"></i></td><td>1</td></tr>
<tr class="sel"><td><div class="nm"><i class="g v"></i><i class="g2"></i><span>AREAS</span></div></td><td><svg class="eye"><use href="#eye"/></svg></td><td><svg class="mag"><use href="#mag"/></svg></td><td></td><td><i class="sw"></i></td><td>14</td></tr>
<tr><td><div class="nm"><i class="g v"></i><i class="g2"></i><span>FITTINGS</span></div></td><td><svg class="eye"><use href="#eye"/></svg></td><td><svg class="mag"><use href="#mag"/></svg></td><td></td><td><i class="sw"></i></td><td>41</td></tr>
<tr><td><div class="nm"><i class="g v"></i><i class="g2"></i><span>SUPPLY</span></div></td><td><svg class="eye"><use href="#eye"/></svg></td><td><svg class="mag"><use href="#mag"/></svg></td><td></td><td><i class="sw blue"></i></td><td>1</td></tr>
<tr><td><div class="nm"><i class="g v"></i><i class="g2"></i><span>DIMENSIO...</span></div></td><td><svg class="eye"><use href="#eye"/></svg></td><td><svg class="mag"><use href="#mag"/></svg></td><td></td><td><i class="sw red"></i></td><td>0</td></tr>
<tr><td><div class="nm"><i class="g v"></i><i class="g2"></i><span>DETAILS</span></div></td><td><svg class="eye"><use href="#eye"/></svg></td><td><svg class="mag"><use href="#mag"/></svg></td><td></td><td><i class="sw"></i></td><td>0</td></tr>
<tr><td><div class="nm"><i class="g v"></i><i class="g2"></i><span>HANGERS</span></div></td><td><svg class="eye"><use href="#eye"/></svg></td><td><svg class="mag"><use href="#mag"/></svg></td><td></td><td><i class="sw"></i></td><td>2</td></tr>
<tr><td><div class="nm"><i class="g v"></i><i class="g2 last"></i><span>NOTES</span></div></td><td><svg class="eye"><use href="#eye"/></svg></td><td><svg class="mag"><use href="#mag"/></svg></td><td></td><td><i class="sw red"></i></td><td>1</td></tr>
<tr><td><div class="nm"><i class="g"><b>+</b></i><span>BACKGROUND</span></div></td><td><svg class="eye"><use href="#eye"/></svg></td><td><svg class="mag"><use href="#mag"/></svg></td><td></td><td><i class="sw"></i></td><td>0</td></tr>
<tr><td><div class="nm"><i class="g"></i><span>BENCHMARK</span></div></td><td><svg class="eye"><use href="#eye"/></svg></td><td><svg class="mag"><use href="#mag"/></svg></td><td></td><td><i class="sw"></i></td><td>1</td></tr>
<tr><td><div class="nm"><i class="g last"><b>+</b></i><span>SPRINKLER S...</span></div></td><td><svg class="eye"><use href="#eye"/></svg></td><td><svg class="mag"><use href="#mag"/></svg></td><td></td><td><i class="sw"></i></td><td>0</td></tr>
</tbody></table>
</div>
<div class="ptabs"><button class="on">La...</button><button>D...</button><button>Sy...</button><button>Al...</button><button>Se...</button><button>D...</button><button>Te...</button><button>Pa...</button><button>N...</button><button>Tr...</button><button>Fa...</button></div>
</aside>

<main class="docs">
<div class="dtabs"><div class="tabs"><button>Start Page</button><button>Drawing1</button><button>Drawing2</button><button>Drawing3</button><button>Complete Grid Wizard.cad</button><button>P2S - 1.cad</button><button>P2S - 2.cad</button><button>P2S - 3.cad</button><button>P2S - 4.cad</button><button>P2S - 5.cad</button><button>Match Elevation.cad</button><button>Drawing4</button><button>Simple Threaded System.cad</button></div><button class="active">Simple Grooved System.cad <svg viewBox="0 0 8 8"><path d="M1 1l6 6M7 1L1 7"/></svg></button><span class="scr">◁</span><span class="scr">▷</span></div>
<div class="frame">
<div class="view">
<div class="canvas">
<svg class="plan-svg" viewBox="1690 370 158 320">
<g fill="none" stroke="#4040ff"><path d="M1848 382h-50l-1 100-1 60v29h52" stroke-width="5"/><path d="M1740 534l22 35M1740 532l24 17M1815 571l27 80M1842 405q3 30 6 60M1842 518l6 12"/></g>
<g fill="#4040ff"><path d="M1763 549h19l7 16-9 15h-15l-8-15zM1765 580h15l9 16-7 17h-18l-7-17zM1841 650h7v32h-7l-8-16z"/></g>
<text x="1701" y="482" class="zone">Ordinary GroupII-0.20</text>
<path d="M1728 482v78h66M1741 471h100" fill="none" stroke="#777" stroke-dasharray="10 5"/>
<path d="M1813 565q4-50 18-48 10 1 11 5" fill="none" stroke="#bbb" stroke-dasharray="5 2"/>
<path d="M1817 449h28M1817 452h28" stroke="#7a2828"/>
<path d="M1842 386v147" stroke="#f00" stroke-width="2"/>
<path d="M1744 475h94M1737 482v44" stroke="#333" stroke-width="7"/><path d="M1744 474h94M1737 482v44" stroke="#4a4a4a"/>
<path d="M1836 469h12v12h-12z" fill="#8f8383"/>
<path d="M1730 470h15v11h-4v2h-8v-2h-3zM1731 526h11v4l-4 4h-5l-4-4zM1839 386h6v2h-6zM1839 437h6v7h-6zM1839 457h6v6h-6zM1840 530h5v4h-5z" fill="#ff8c00"/>
<path d="M1743 531h20" stroke="#e8c020" stroke-width="4"/><path d="M1745 531h6" stroke="#0a0" stroke-width="4"/><path d="M1762 534v20" stroke="#2a9a20" stroke-width="4"/><path d="M1759 556h7" stroke="#df8" stroke-width="3"/><circle cx="1762" cy="531" r="3" fill="#fff"/><path d="M1749 534v20" stroke="#c22" stroke-width="2"/><path d="M1733 540h9q-4 6-9 0z" fill="#d00"/>
<g fill="#333" stroke="#111"><circle cx="1842" cy="414" r="4" fill="none"/><path d="M1837 419l10-10M1837 501l10-10"/><circle cx="1813" cy="566" r="3"/></g>
</svg>
<section class="tag">
<h2>Riser Tag</h2>
<table>
<tr><th colspan="2">Design Basis</th></tr>
<tr><td>Occupancy:</td><td>Ordinary Group II</td></tr>
<tr><td>Total Sprinklers:</td><td>4</td></tr>
<tr><td>Number Of Sprinklers Calculated:</td><td>4</td></tr>
<tr><td>Number Of Nozzles Calculated:</td><td>0</td></tr>
<tr><td>K-Factor:</td><td>5.6</td></tr>
<tr><td>Orifice Size:</td><td>0.5</td></tr>
<tr><td>Design Density:</td><td>0.20 gpm/ft²</td></tr>
<tr><td>Average Density:</td><td>0.96 gpm/ft²</td></tr>
<tr><td>Area of Application:</td><td>1500 ft² (Actual 111 ft²)</td></tr>
<tr><th colspan="2">Demand at Base Of Riser or Point Of Connection</th></tr>
<tr><td>Total Demand Flow(gpm):</td><td>0.00</td></tr>
<tr><td>Pressure(psi):</td><td>0.000</td></tr>
<tr><th colspan="2">Water Supply Information At Time Of Design</th></tr>
<tr><td>Static Pressure(psi):</td><td>85.000</td></tr>
<tr><td>Residual Pressure(psi):</td><td>55.000</td></tr>
<tr><td>Supply Flow(gpm):</td><td>1200.00</td></tr>
<tr><td>Total Demand Flow(gpm):</td><td>356.54</td></tr>
<tr><td>Total Demand Pressure(psi):</td><td>30.730</td></tr>
<tr><td>Safety Margin(psi):</td><td>51.093</td></tr>
</table>
</section>
<svg class="ucs" viewBox="-22 -104 126 128"><g fill="none"><path d="M-10 0v-60h-10l20-40 20 40h-10v50" stroke="#338033"/><path d="M10-10h50v-10l40 20-40 20v-10h-60" stroke="#a03c3c"/><circle r="10" stroke="#222" stroke-dasharray="3 1"/></g><path d="M0 0v-10a10 10 0 0 0-10 10zM0 0v10a10 10 0 0 0 10-10z"/><path d="M-20 0h40" stroke="#2a2a80" stroke-width="2"/></svg>
</div>
<div class="vscroll"><i></i></div>
<div class="hscroll"><i></i></div>
</div>
<div class="sheets"><button class="nav" aria-label="First">|◂</button><button class="nav" aria-label="Previous">◂</button><button class="nav" aria-label="Next">▸</button><button class="nav" aria-label="Last">▸|</button><button class="sheet on">*Model</button><button class="sheet">Sheet 1</button></div>
</div>
</main>
<footer class="status"><span class="help">For Help, press F1</span><span>-6'-7½, -5'-3½</span><span class="nil"></span><span>Elev1: 2'-3</span><span>A:-79'-7½, 1'-6½, 2'-3</span><span class="nil"></span><span># Off</span><span>Foot</span></footer>

<div class="dock">
<div class="vgroup v1"><i class="vgrip"></i><button class="vt">Import DWG</button><button class="vb" aria-label="DWG"><svg><use href="#dwg"/></svg></button><button class="vb" aria-label="Copy pages"><svg><use href="#pages"/></svg></button><button class="vb" aria-label="Chain"><svg><use href="#chain"/></svg></button></div><button class="vmore" aria-label="More"></button>
<div class="vgroup v2"><i class="vgrip"></i><button class="vb" aria-label="Branch"><svg><use href="#branch"/></svg></button><button class="vb" aria-label="Auto branch"><svg><use href="#wpipe"/></svg></button><i class="hsep"></i><button class="vb" aria-label="Peak"><svg><use href="#chev"/></svg></button><button class="vb" aria-label="Slope"><svg><use href="#beam2"/></svg></button><i class="hsep"></i><button class="vb" aria-label="Auto route"><svg><use href="#wpath"/></svg></button><button class="vb" aria-label="Route"><svg><use href="#npath"/></svg></button></div><button class="vmore" aria-label="More"></button>
<div class="vgroup v3"><i class="vgrip"></i><button class="vt">GLSL</button><button class="vt hot">OpenGL®</button><button class="vb" aria-label="Back view"><svg><use href="#mleft"/></svg></button><button class="vb" aria-label="Forward view"><svg><use href="#mright"/></svg></button><button class="vb" aria-label="View properties"><svg><use href="#prop"/></svg></button></div><button class="vmore" aria-label="More"></button>
</div>
</div>

<div class="bar bottom">
<div class="group g-panes"><i class="grip"></i><div class="items">
<button class="tb">Reset Panes</button><button class="ib" aria-label="Panes"><svg><use href="#panes"/></svg></button><button class="tb hot tight">Layers</button><button class="tb hot tight">Parts Picker</button><button class="tb hot tight">Alerts</button><button class="tb hot tight">Select</button><button class="tb hot tight">Symbols</button><button class="ib blue" aria-label="Move left"><svg><use href="#al"/></svg></button><button class="tb ax">-Y</button><button class="ib blue" aria-label="Move up"><svg><use href="#au"/></svg></button><button class="tb ax">+X</button><button class="ib blue" aria-label="Move right"><svg><use href="#ar"/></svg></button><button class="tb ax">+Y</button><button class="ib blue" aria-label="Move down"><svg><use href="#ad"/></svg></button><button class="tb ax">-X</button></div><button class="more" aria-label="More"></button></div>
<div class="group g-step"><i class="grip"></i><div class="items"><button class="ib" aria-label="Go"><svg><use href="#go"/></svg></button><label class="step"><input type="text" value=",,11" aria-label="Step distance"></label></div><button class="more" aria-label="More"></button></div>
<div class="group g-view"><i class="grip"></i><div class="items">
<button class="ib" aria-label="Undo dimension"><svg><use href="#undodim"/></svg></button><button class="ib" aria-label="Select dots"><svg><use href="#dots"/></svg></button><button class="ib" aria-label="Check"><svg><use href="#checks"/></svg></button><button class="ib" aria-label="Flash"><svg><use href="#spark"/></svg></button><button class="ib" aria-label="Target"><svg><use href="#target"/></svg></button><button class="tb hot">Lock On Target</button><button class="ib" aria-label="Zoom in"><svg><use href="#zin"/></svg></button><button class="ib" aria-label="Zoom out"><svg><use href="#zout"/></svg></button><button class="ib pur" aria-label="Up"><svg><use href="#au"/></svg></button><button class="ib pur" aria-label="Left"><svg><use href="#al"/></svg></button><button class="ib pur" aria-label="Rotate left"><svg><use href="#ccw"/></svg></button><button class="ib pur" aria-label="Down"><svg><use href="#ad"/></svg></button><button class="ib pur" aria-label="Right"><svg><use href="#ar"/></svg></button><button class="ib pur" aria-label="Rotate right"><svg><use href="#cw"/></svg></button><button class="ib" aria-label="Spin left"><svg><use href="#rotl"/></svg></button><button class="ib" aria-label="Spin right"><svg><use href="#rotr"/></svg></button><button class="ib" aria-label="Left view"><svg><use href="#h1"/></svg></button><button class="ib" aria-label="Front view"><svg><use href="#h2"/></svg></button><button class="ib" aria-label="Right view"><svg><use href="#h3"/></svg></button><button class="ib" aria-label="Back view"><svg><use href="#h4"/></svg></button><button class="ib" aria-label="Fit"><svg><use href="#fit"/></svg></button><button class="ib" aria-label="Isometric"><svg><use href="#iso"/></svg></button><button class="ib hot" aria-label="Plan"><svg><use href="#plan"/></svg></button></div><button class="more" aria-label="More"></button></div>
</div>
</body>
</html>
```
FILE: styles.css
```css
* { box-sizing: border-box; }
body {
  margin: 0;
  min-height: 100vh;
  display: flex;
  flex-direction: column;
  background: #525252;
  color: #000;
  font: 11px/16px "Open Sans", "Noto Sans", sans-serif;
}
button { border: 0; padding: 0; background: none; font: inherit; color: inherit; white-space: nowrap; flex: none; }
h1, h2 { margin: 0; font-weight: normal; }
i { font-style: normal; }
svg { fill: none; stroke: #000; stroke-width: 2; display: block; }
.sprite { display: none; }
.s16 { width: 16px; height: 16px; flex: none; }
.tx { font: bold 16px "Liberation Sans", sans-serif; fill: #000; stroke: none; }

.title { height: 23px; display: flex; align-items: center; gap: 6px; padding: 0 3px 0 2px; background: linear-gradient(90deg, #e6f8f5, #f0f4ec 45%, #e4f8f6 65%); }
.title h1 { font: 12px/16px Roboto, "Open Sans", sans-serif; white-space: nowrap; flex: 1; }
.winbtns { display: flex; }
.winbtns button { width: 45px; display: flex; justify-content: center; }
.winbtns svg { width: 11px; height: 11px; stroke-width: 1; }
.menubar { height: 23px; display: flex; align-items: center; padding: 0 4px 0 2px; color: #fff; }
.menubar nav { display: flex; justify-content: space-between; flex: 0 1 1072px; margin-left: 11px; }
.mdibtns { display: flex; gap: 4px; margin: 4px 0 0 auto; }
.mdibtns svg { width: 12px; height: 12px; stroke: #9aa0b0; }

.bar { height: 46px; display: flex; padding-bottom: 1px; }
.group { display: flex; min-width: 0; background: linear-gradient(#c6cad0, #d0d3d8 20%, #c4c8ce 45%, #a6acb6 70%, #8f96a1); border-bottom: 1px solid #5c626e; border-radius: 3px; overflow: hidden; }
.grip { width: 3px; height: 27px; margin: 9px 3px 0 4px; flex: none; background: repeating-linear-gradient(#333a46 0 2px, #eee 2px 3px, transparent 3px 4px); }
.items { flex: 1; display: flex; align-items: center; justify-content: space-between; min-width: 0; padding-top: 2px; }
.more { width: 19px; align-self: stretch; background: linear-gradient(#a4aab5, #4f5662); display: flex; flex-direction: column; align-items: center; justify-content: flex-end; gap: 4px; padding-bottom: 3px; }
.more::before { content: ""; width: 9px; height: 2px; background: #eee; }
.more::after { content: ""; border: 5px solid transparent; border-top: 5px solid #eee; border-bottom: 0; }
.ib { width: 44px; height: 42px; display: flex; align-items: center; justify-content: center; }
.ib svg, .vb svg { width: 32px; height: 30px; }
.tb { padding: 0 4px; height: 40px; }
.tb:disabled { color: #8b9099; }
.g-file { flex: 0 1 687px; }
.g-hyd { flex: 0 1 1166px; }
.g-parts { flex: 0 1 1890px; }
.g-detail { flex: 0 1 571px; }
.g-detail .tb { padding: 0 3px; }
.g-calc { flex: 0 1 736px; }
.g-elev { flex: 0 1 386px; }
.g-spr { flex: 0 1 215px; }
.g-panes { flex: 0 1 627px; }
.g-step { flex: 0 1 142px; }
.g-view { flex: 0 1 1087px; }
.hot { background: linear-gradient(#fcd9ad, #fdc282 28%, #fdac4c 34%, #fdc468 60%, #ffe98e 85%, #ffd97e); border: 1px solid #8e8a80; border-right-color: #eee; border-bottom-color: #f4f4f4; }
.ib.hot { height: 41px; }
.bottom .tb.tight { padding: 0 1px; }
.bottom .ax { padding: 0; margin-right: 3px; width: 14px; }
.g-panes .blue { width: 40px; }
.blue { color: #00f; }
.pur { color: #800080; }
.step { padding-right: 6px; }
.step input { width: 60px; height: 17px; border: 0; padding: 0 3px; display: block; font: inherit; color: #fff; background: linear-gradient(#0078d7, #0078d7) 3px 0 / 19px 14px no-repeat #fff; }

.work { flex: 1; display: grid; grid-template-columns: 323px 1fr 47px; grid-template-rows: 1fr 19px; min-height: 0; }
.panel { display: flex; flex-direction: column; width: 319px; padding-top: 1px; min-height: 0; }
.phead { height: 19px; flex: none; display: flex; align-items: center; gap: 6px; padding: 0 5px 0 4px; background: #9b9d9b; color: #333; border-right: 1px solid #ddd; }
.phead h2 { flex: 1; font-size: 11px; }
.phead svg { width: 10px; height: 10px; stroke: #444; stroke-width: 1; }
.pbody { flex: 1; border: 1px solid #ddd; border-width: 3px 3px 1px 2px; background: #fff; min-height: 0; overflow: hidden; }
.ptools { height: 44px; display: flex; align-items: center; padding-left: 3px; background: linear-gradient(#c9cdd3, #8f96a1); overflow: hidden; }
.vsep { width: 2px; height: 26px; margin: 0 3px; flex: none; background: #6b7280; border-right: 1px solid #e8e8e8; }
.tree { width: 100%; border-collapse: collapse; table-layout: fixed; }
.c-name { width: 101px; } .c-s { width: 20px; } .c-el { width: 75px; }
.tree th { height: 18px; padding: 0; font-weight: normal; text-align: center; background: linear-gradient(#fff, #e6e6e6); border-right: 1px solid #b8b8b8; border-bottom: 1px solid #b0b0b0; }
.tree th:first-child, .tree th:nth-child(6) { text-align: left; padding-left: 6px; }
.tree td { height: 17px; padding: 0; white-space: nowrap; }
.tree td:nth-child(6) { padding-left: 3px; }
.nm { display: flex; height: 17px; line-height: 17px; }
.nm span { flex: 1; padding-left: 1px; }
.g, .g2 { flex: none; width: 17px; height: 17px; background: repeating-linear-gradient(#999 0 1px, transparent 1px 2px) 8px 0 / 1px 100% no-repeat, repeating-linear-gradient(90deg, #999 0 1px, transparent 1px 2px) 8px 8px / 7px 1px no-repeat; display: flex; align-items: center; padding-left: 4px; }
.g2 { width: 14px; background-position: 6px 0, 6px 8px; margin-right: 1px; }
.g.v { background-size: 1px 100%, 0 0; }
.g.first { background-position: 8px 9px, 8px 8px; }
.g.last, .g2.last { background-size: 1px 9px, 7px 1px; }
.g b { width: 9px; height: 9px; border: 1px solid #888; background: #fff; font: 9px/7px "DejaVu Sans", sans-serif; text-align: center; }
.sel { color: #fff; }
.sel td:not(:first-child), .sel .nm span { background: #0078d7; }
.eye { width: 16px; height: 12px; }
.mag { width: 14px; height: 14px; }
.sw { display: block; width: 18px; height: 14px; background: #000; border: 1px solid #eee; border-right-color: #888; border-bottom-color: #888; }
.sw.blue { background: #00f; } .sw.red { background: #f00; }
.ptabs { display: flex; height: 24px; flex: none; padding: 0 0 3px 4px; color: #fff; }
.ptabs button { width: 27px; padding: 3px 0 0 4px; text-align: left; height: 21px; }
.ptabs .on { width: 23px; margin-right: 4px; background: linear-gradient(#ccd6d6, #fff); color: #000; border-radius: 0 0 3px 3px; }

.docs { display: flex; flex-direction: column; min-width: 0; min-height: 0; border-left: 1px solid #999; border-top: 1px solid #aaa; }
.dtabs { height: 20px; flex: none; display: flex; color: #fff; align-items: center; padding-left: 7px; }
.tabs { flex: 0 1 1075px; display: flex; justify-content: space-between; margin-right: 11px; }
.dtabs .active { flex: 0 0 169px; height: 18px; margin-top: 2px; background: linear-gradient(#fff, #d8ecf0); color: #000; font-weight: 600; border-radius: 4px 4px 0 0; padding: 0 4px; display: flex; justify-content: space-between; align-items: center; }
.active svg { width: 8px; height: 8px; stroke-width: 1; }
.scr { color: #3c3c3c; margin-right: 9px; }
.active + .scr { margin-left: auto; }
.frame { flex: 1; min-height: 0; display: flex; flex-direction: column; border: 3px solid #efefef; border-width: 2px 8px 6px 2px; border-right-style: double; border-bottom-style: double; background: #6c6c6c; padding: 3px 0 0 4px; }
.view { flex: 1; min-height: 0; display: grid; grid-template-columns: 1fr 17px; grid-template-rows: 1fr 17px; background: #f0f0f0; }
.canvas { position: relative; background: #5a5a5a; overflow: hidden; }
.vscroll { display: flex; align-items: center; justify-content: center; }
.vscroll i { width: 2px; height: 17px; margin-top: -60px; background: #868686; }
.hscroll { padding: 8px 0 0 17px; grid-column: 1 / 3; }
.hscroll i { display: block; width: 17px; height: 2px; background: #868686; }
.plan-svg { position: absolute; right: 0; top: 160px; width: 158px; height: 320px; stroke: none; }
.plan-svg path, .plan-svg circle { stroke-width: 1; }
.plan-svg [stroke-width="2"] { stroke-width: 2; }
.plan-svg [stroke-width="3"] { stroke-width: 3; }
.plan-svg [stroke-width="4"] { stroke-width: 4; }
.plan-svg [stroke-width="5"] { stroke-width: 5; }
.plan-svg [stroke-width="7"] { stroke-width: 7; }
.zone { font: bold 13px "Liberation Sans", sans-serif; fill: #4040ff; stroke: none; }
.tag { position: absolute; left: 50%; top: 170px; width: 487px; height: 426px; background: #fff; border: 1px solid #111; font: bold 13px/16px "Liberation Sans", sans-serif; display: flex; flex-direction: column; }
.tag h2 { height: 31px; line-height: 30px; font-size: 18px; font-weight: bold; text-align: center; border-bottom: 1px solid #000; flex: none; }
.tag table { width: 100%; flex: 1; border-collapse: collapse; }
.tag th, .tag td { padding: 0; text-align: left; }
.tag th { padding-left: 7px; }
.tag td:first-child { padding-left: 21px; width: 334px; }
.ucs { position: absolute; left: 50%; top: 66px; width: 126px; height: 128px; margin-left: -22px; stroke: none; stroke-width: 1; }
.ucs > path { fill: #000; }
.sheets { height: 18px; flex: none; display: flex; align-items: center; gap: 3px; padding-left: 1px; background: linear-gradient(#505050, #7a7a7a 40%); }
.nav { width: 13px; height: 13px; background: #f0f0f0; font: 11px/13px "DejaVu Sans", sans-serif; color: #333; }
.sheet { height: 18px; padding: 0 14px 0 8px; clip-path: polygon(0 0, 100% 0, calc(100% - 14px) 100%, 0 100%); background: linear-gradient(#e4e4ec, #b4bccc); }
.sheet.on { margin-left: 1px; background: linear-gradient(#fff, #e0e8f0); font-weight: 600; }
.sheet + .sheet { margin-left: -13px; padding-left: 10px; }

.status { grid-column: 1 / 3; grid-row: 2; display: flex; padding-right: 2px; background: linear-gradient(#3d404d 0 8px, #303030 8px); color: #fff; line-height: 21px; }
.status span { padding: 0 3px 0 4px; border-left: 1px solid #777; white-space: nowrap; }
.status .help { flex: 1; padding-left: 4px; border: 0; }
.status .nil { width: 7px; padding: 0; }

.dock { grid-column: 3; grid-row: 1 / 3; display: flex; flex-direction: column; margin: 0 0 7px 0; min-height: 0; }
.vgroup { flex: none; display: flex; flex-direction: column; align-items: center; background: linear-gradient(90deg, #c6cad0, #cfd2d8 20%, #9299a4 95%, #6c727e); }
.v1 { height: 213px; } .v2 { height: 280px; } .v3 { height: 241px; }
.vgrip { width: 31px; height: 3px; margin: 4px 0 3px; flex: none; background: repeating-linear-gradient(90deg, #333a46 0 2px, #eee 2px 3px, transparent 3px 4px); }
.vmore { height: 20px; align-self: stretch; background: linear-gradient(90deg, #4f5662, #a4aab5); display: flex; align-items: center; justify-content: flex-end; gap: 4px; padding-right: 4px; }
.vmore::before { content: ""; width: 2px; height: 10px; background: #eee; }
.vmore::after { content: ""; border: 5px solid transparent; border-left: 5px solid #eee; border-right: 0; }
.vb { width: 43px; height: 42px; display: flex; align-items: center; justify-content: center; }
.vt { writing-mode: vertical-rl; font: 12px/43px "Liberation Sans", sans-serif; padding: 6px 0 2px; }
.vt.hot { background: linear-gradient(90deg, #fcd9ad, #fdac4c 34%, #fdc468 60%, #ffe98e 85%); line-height: 41px; padding: 3px 0 2px; }
.hsep { width: 28px; height: 2px; margin: 3px 0; background: #fff; border-top: 1px solid #666; }
```
